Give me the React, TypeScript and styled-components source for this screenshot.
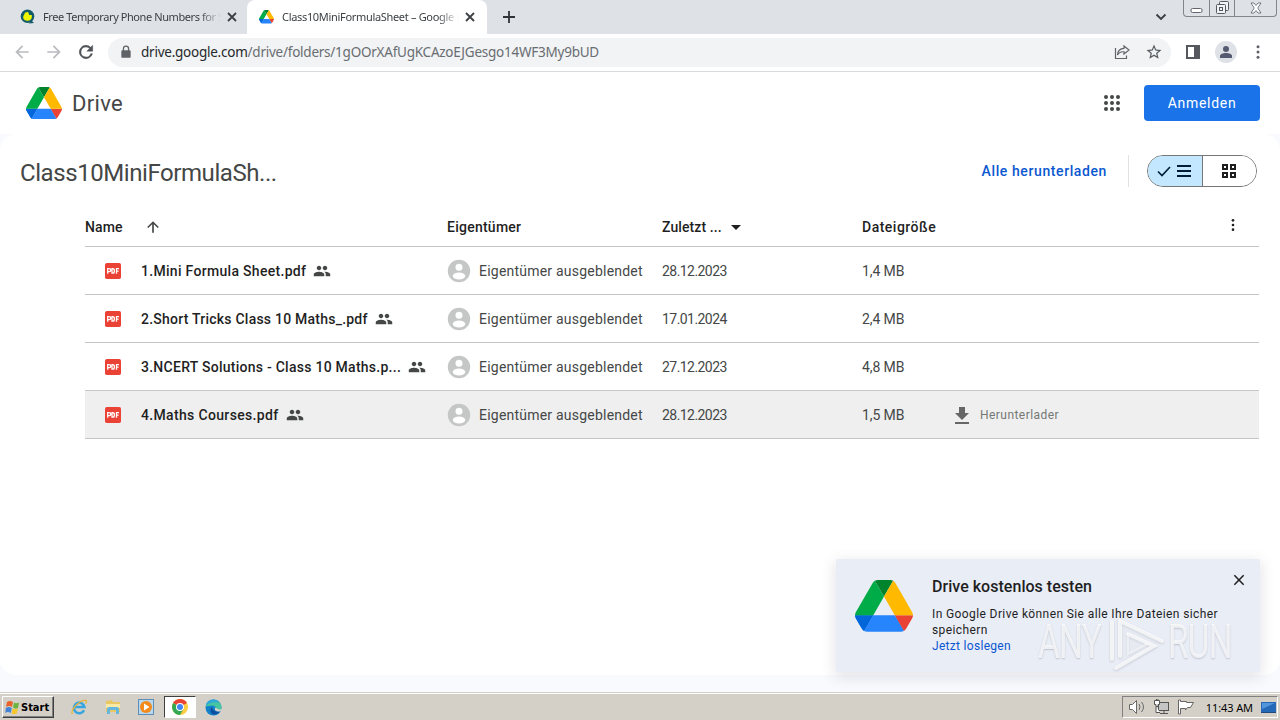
import type { ReactNode } from 'react'
import styled, { createGlobalStyle } from 'styled-components'

const GlobalStyle = createGlobalStyle`
  * {
    box-sizing: border-box;
  }

  body {
    margin: 0;
    overflow: hidden;
  }

  svg {
    display: block;
    flex: none;
  }
`

const uiFont = `'Noto Sans', 'Open Sans', sans-serif`
const pageFont = `Roboto, 'Liberation Sans', sans-serif`

const Screen = styled.div`
  position: relative;
  display: flex;
  flex-direction: column;
  width: 1280px;
  height: 720px;
  overflow: hidden;
  background: #fff;
  font-family: ${pageFont};
`

const Label = styled.span<{ $spacing?: number }>`
  white-space: pre;
  letter-spacing: ${(p) => p.$spacing ?? 0}px;
`

/* browser */

const TabStrip = styled.div`
  display: flex;
  height: 34px;
  background: #dee1e6;
  font-family: ${uiFont};
  font-size: 11px;
  color: #3c4043;
`

const Tab = styled.div<{ $active?: boolean }>`
  display: flex;
  align-items: center;
  width: ${(p) => (p.$active ? 240 : 247)}px;
  padding-left: ${(p) => (p.$active ? 12 : 20)}px;
  background: ${(p) => (p.$active ? '#fff' : 'transparent')};
  border-radius: 8px 8px 0 0;
`

const TabTitle = styled.div<{ $width: number; $spacing: number }>`
  width: ${(p) => p.$width}px;
  margin: 0 5px 0 8px;
  overflow: hidden;
  white-space: pre;
  letter-spacing: ${(p) => p.$spacing}px;
  mask-image: linear-gradient(to right, #000 88%, transparent);
`

const NewTab = styled.div`
  display: flex;
  flex: 1;
  align-items: center;
  padding-left: 15px;
`

const TabSearch = styled.div`
  display: flex;
  align-items: center;
  width: 28px;
`

const WindowButtons = styled.div`
  display: flex;
  width: 94px;
  height: 17px;
  margin-right: 3px;
  border: 1px solid #81868e;
  border-top: 0;
  border-radius: 0 0 4px 4px;
`

const WindowButton = styled.div<{ $width: number }>`
  display: flex;
  align-items: center;
  justify-content: center;
  width: ${(p) => p.$width}px;

  & + & {
    border-left: 1px solid #81868e;
  }
`

const Toolbar = styled.div`
  display: flex;
  align-items: center;
  height: 38px;
  padding: 0 13px 0 12px;
  border-bottom: 1px solid #d8dadd;
`

const NavIcons = styled.div`
  display: flex;
  gap: 12px;
  width: 96px;
`

const AddressBar = styled.div`
  display: flex;
  align-items: center;
  width: 1063px;
  height: 29px;
  padding: 0 8px 0 11px;
  border-radius: 15px;
  background: #f1f3f4;
  color: #696d72;
  font-family: ${uiFont};
  font-size: 13.5px;

  b {
    color: #25282b;
    font-weight: 400;
  }
`

const Url = styled.div`
  flex: 1;
  padding-left: 8px;
`

const AddressIcons = styled.div`
  display: flex;
  gap: 14px;
`

const ToolbarIcons = styled.div`
  display: flex;
  flex: 1;
  align-items: center;
  justify-content: flex-end;
  gap: 12px;
`

const ProfileBadge = styled.div`
  display: flex;
  align-items: center;
  justify-content: center;
  width: 22px;
  height: 22px;
  margin-left: 3px;
  border-radius: 50%;
  background: #dee1e6;
`

/* drive */

const Header = styled.header`
  display: flex;
  align-items: center;
  height: 63px;
  padding: 1px 20px 0 26px;
`

const Brand = styled.div`
  display: flex;
  flex: 1;
  align-items: center;
  gap: 10px;
  color: #444746;
  font-size: 22px;
`

const SignInButton = styled.button`
  width: 116px;
  height: 36px;
  margin-left: 20px;
  padding: 0;
  border: 0;
  border-radius: 4px;
  background: #1a73e8;
  color: #fff;
  font-family: ${pageFont};
  font-size: 14px;
`

const Page = styled.div`
  flex: 1;
  padding-bottom: 17px;
  background: #f8fafd;
`

const Panel = styled.main`
  height: 541px;
  padding-right: 20px;
  border-radius: 16px;
  background: #fff;
`

const TitleBar = styled.div`
  display: flex;
  align-items: center;
  height: 74px;
  padding: 0 3px 0 20px;
`

const FolderName = styled.h1`
  flex: 1;
  margin: 3px 0 0;
  color: #444746;
  font-size: 24px;
  font-weight: 400;
`

const DownloadAll = styled.a`
  color: #0b57d0;
  font-size: 14px;
  font-weight: 500;
`

const Divider = styled.div`
  width: 1px;
  height: 32px;
  margin: 0 18px 0 21px;
  background: #e0e2e5;
`

const ViewToggle = styled.div`
  display: flex;
  width: 110px;
  height: 32px;
  border: 1px solid #747775;
  border-radius: 16px;
  overflow: hidden;
`

const ToggleSide = styled.div<{ $on?: boolean }>`
  display: flex;
  flex: ${(p) => (p.$on ? '0 0 55px' : 1)};
  align-items: center;
  justify-content: center;
  gap: 6px;
  padding-right: 2px;
  border-right: ${(p) => (p.$on ? '1px solid #747775' : 0)};
  background: ${(p) => (p.$on ? '#c2e7ff' : '#fff')};
`

const Table = styled.div`
  margin-left: 85px;
  width: 1174px;
`

const Row = styled.div<{ $head?: boolean; $hover?: boolean }>`
  display: grid;
  grid-template-columns: 362px 215px 200px 92px 1fr;
  align-items: center;
  height: ${(p) => (p.$head ? 39 : 48)}px;
  border-bottom: 1px solid #c4c7c5;
  background: ${(p) => (p.$hover ? '#efefef' : 'transparent')};
  color: ${(p) => (p.$head ? '#1f1f1f' : '#444746')};
  font-size: 14px;
  font-weight: ${(p) => (p.$head ? 500 : 400)};
`

const Cell = styled.div<{ $gap?: number }>`
  display: flex;
  align-items: center;
  gap: ${(p) => p.$gap ?? 0}px;
`

const FileName = styled(Cell)`
  padding-left: 20px;
  color: #1f1f1f;
  font-weight: 500;

  svg:first-child {
    margin-right: 13px;
  }
`

const MenuCell = styled(Cell)`
  justify-content: flex-end;
  padding: 0 18px 5px 0;
`

const Download = styled(Cell)`
  color: #747775;
  font-size: 12px;
`

const Promo = styled.aside`
  position: absolute;
  left: 836px;
  top: 559px;
  display: flex;
  width: 424px;
  height: 113px;
  padding: 21px 14px 0 19px;
  background: #e9edf6;
  border-radius: 2px;
  box-shadow: 0 4px 14px 2px rgba(60, 64, 90, 0.13);
`

const PromoText = styled.div`
  flex: 1;
  padding-left: 19px;
  color: #1f1f1f;
  font-size: 12px;
  line-height: 16px;

  h2 {
    margin: -3px 0 9px;
    font-size: 16px;
    font-weight: 500;
    line-height: 20px;
  }

  a {
    display: block;
    color: #0b57d0;
  }
`

const PromoClose = styled.div`
  margin-top: -7px;
`

const Watermark = styled.div`
  position: absolute;
  left: 1038px;
  top: 612px;
  display: flex;
  align-items: center;
  width: 198px;
  height: 60px;
  color: rgba(255, 255, 255, 0.75);
  font-family: Roboto, sans-serif;
  font-size: 49px;
  line-height: 36px;
  text-shadow: 0 1px 2px rgba(90, 95, 110, 0.3);
`

const WatermarkWord = styled.span<{ $width: number }>`
  width: ${(p) => p.$width}px;
  letter-spacing: -1px;
  transform: scaleX(0.68);
  transform-origin: left;
`

const WatermarkPlay = styled.svg`
  filter: drop-shadow(0 1px 1px rgba(80, 85, 100, 0.3));
`

/* taskbar */

const Taskbar = styled.footer`
  display: flex;
  align-items: center;
  height: 28px;
  padding: 1px 2px 0;
  border-top: 1px solid #d4d0c8;
  background: #d4d0c8;
  box-shadow: inset 0 1px #fff;
`

const StartButton = styled.div`
  display: flex;
  align-items: center;
  gap: 1px;
  width: 52px;
  height: 22px;
  padding-left: 2px;
  border: 1px solid;
  border-color: #fff #404040 #404040 #fff;
  box-shadow: inset -1px -1px #808080;
  color: #000;
  font-family: 'DejaVu Sans Condensed', 'DejaVu Sans', sans-serif;
  font-size: 11px;
  font-weight: 700;
`

const TaskIcon = styled.div<{ $active?: boolean }>`
  display: flex;
  align-items: center;
  justify-content: center;
  width: 32px;
  height: 22px;
  margin-left: 1.7px;
  border: 1px solid;
  border-color: ${(p) => (p.$active ? '#404040 #fff #fff #404040' : 'transparent')};
  background: ${(p) => (p.$active ? '#fff' : 'transparent')};
`

const TaskIcons = styled.div`
  display: flex;
  flex: 1;
  padding-left: 7.5px;
`

const Tray = styled.div`
  display: flex;
  align-items: center;
  width: 156px;
  height: 22px;
  padding-left: 5px;
  border: 1px solid;
  border-color: #808080 #fff #fff #808080;
  color: #000;
  font-family: ${uiFont};
  font-size: 11px;
`

const TrayIcons = styled.div`
  display: flex;
  gap: 7px;
  width: 79px;
`

type IconProps = { size?: number; color?: string; children: ReactNode }

const Icon = ({ size = 20, color = '#5f6368', children }: IconProps) => (
  <svg width={size} height={size} viewBox="0 0 24 24" fill={color}>
    {children}
  </svg>
)

const DriveLogo = ({ width }: { width: number }) => (
  <svg width={width} height={(width * 78) / 87.3} viewBox="0 0 87.3 78">
    <path fill="#2684fc" d="m6.6 66.85 3.85 6.65c.8 1.4 1.95 2.5 3.3 3.3l13.75-23.8h-27.5c0 1.55.4 3.1 1.2 4.5z" />
    <path fill="#0066da" d="m1.2 57.5 5.4 9.35 3.85 6.65c.8 1.4 1.95 2.5 3.3 3.3l13.75-23.8h-27.5c0 1.55.4 3.1 1.2 4.5z" />
    <path fill="#00ac47" d="m43.65 25-13.75-23.8c-1.35.8-2.5 1.9-3.3 3.3l-25.4 44a9.06 9.06 0 0 0-1.2 4.5h27.5z" />
    <path fill="#ea4335" d="m73.55 76.8c1.35-.8 2.5-1.9 3.3-3.3l1.6-2.75 7.65-13.25c.8-1.4 1.2-2.95 1.2-4.5h-27.5l5.85 11.5z" />
    <path fill="#00832d" d="m43.65 25 13.75-23.8c-1.35-.8-2.9-1.2-4.5-1.2h-18.5c-1.6 0-3.15.45-4.5 1.2z" />
    <path fill="#2684fc" d="m59.8 53h-32.3l-13.75 23.8c1.35.8 2.9 1.2 4.5 1.2h50.8c1.6 0 3.15-.45 4.5-1.2z" />
    <path fill="#ffba00" d="m73.4 26.5-12.7-22c-.8-1.4-1.95-2.5-3.3-3.3l-13.75 23.8 16.15 28h27.45c0-1.55-.4-3.1-1.2-4.5z" />
  </svg>
)

const CloseIcon = ({ size = 12, color = '#3c4043', stroke = 1.8 }) => (
  <svg width={size} height={size} viewBox="0 0 12 12" fill="none" stroke={color} strokeWidth={stroke}>
    <path d="M2 2l8 8M10 2l-8 8" />
  </svg>
)

const PdfIcon = () => (
  <svg width="16" height="16" viewBox="0 0 16 16">
    <rect width="16" height="16" rx="1.8" fill="#ea4335" />
    <path
      d="M2.7 10.8V5.7h1.6a1.4 1.4 0 0 1 0 2.9H2.7M7 5.7v4.4h.8c1 0 1.6-.7 1.6-2.2S8.800 5.700 7.800 5.700zM11.500 10.800V5.700h2.500M11.500 8.200h2.100"
      fill="none"
      stroke="#fff"
      strokeWidth="1.3"
    />
  </svg>
)

const PeopleIcon = () => (
  <Icon size={18} color="#444746">
    <path d="M16 11c1.660 0 2.990-1.340 2.990-3S17.660 5 16 5s-3 1.340-3 3 1.340 3 3 3zm-8 0c1.660 0 2.990-1.340 2.990-3S9.660 5 8 5 5 6.340 5 8s1.340 3 3 3zm0 2c-2.330 0-7 1.170-7 3.500V19h14v-2.500c0-2.330-4.670-3.500-7-3.500zm8 0c-.29 0-.62.020-.97.050 1.160.84 1.970 1.970 1.970 3.450V19h6v-2.500c0-2.330-4.670-3.500-7-3.500z" />
  </Icon>
)

const OwnerIcon = () => (
  <svg width="24" height="24" viewBox="0 0 24 24">
    <circle cx="12" cy="12" r="11.200" fill="#c4c7c5" />
    <circle cx="12" cy="8.300" r="3.500" fill="#fff" />
    <ellipse cx="12" cy="17" rx="6.300" ry="3.500" fill="#fff" />
  </svg>
)

const MoreIcon = ({ size = 18, color = '#5f6368' }) => (
  <Icon size={size} color={color}>
    <circle cx="12" cy="5" r="2" />
    <circle cx="12" cy="12" r="2" />
    <circle cx="12" cy="19" r="2" />
  </Icon>
)

const files = [
  { name: '1.Mini Formula Sheet.pdf', spacing: 0.3, date: '28.12.2023', size: '1,4 MB' },
  { name: '2.Short Tricks Class 10 Maths_.pdf', spacing: 0.23, date: '17.01.2024', size: '2,4 MB' },
  { name: '3.NCERT Solutions - Class 10 Maths.p...', spacing: 0.26, date: '27.12.2023', size: '4,8 MB' },
  { name: '4.Maths Courses.pdf', spacing: 0.34, date: '28.12.2023', size: '1,5 MB', hover: true },
]

const BrowserChrome = () => (
  <>
    <TabStrip>
      <Tab>
        <svg width="15" height="15" viewBox="0 0 15 15">
          <circle cx="7.500" cy="7.300" r="6.800" fill="#145b6c" />
          <path d="M11 11l3 3-5 .5z" fill="#145b6c" />
          <path d="M3.200 7.500l2-4 3-.5 1 3h2.600v2.600a4.400 3.700 0 0 1-8.600.4z" fill="#eef600" />
        </svg>
        <TabTitle $width={178} $spacing={-0.42}>Free Temporary Phone Numbers for S</TabTitle>
        <CloseIcon />
      </Tab>
      <Tab $active>
        <DriveLogo width={15} />
        <TabTitle $width={177} $spacing={-0.32}>Class10MiniFormulaSheet – Google D</TabTitle>
        <CloseIcon />
      </Tab>
      <NewTab>
        <svg width="14" height="14" viewBox="0 0 14 14" stroke="#303338" strokeWidth="1.800">
          <path d="M7 1v12M1 7h12" />
        </svg>
      </NewTab>
      <TabSearch>
        <svg width="12" height="12" viewBox="0 0 12 12" fill="none" stroke="#3c4043" strokeWidth="1.900">
          <path d="M1.500 3.500L6 8l4.500-4.500" />
        </svg>
      </TabSearch>
      <WindowButtons>
        <WindowButton $width={25}>
          <svg width="13" height="14" viewBox="0 0 13 14" fill="#fff" stroke="#62676e">
            <rect x="1" y="7.500" width="11" height="4" rx="1.500" />
          </svg>
        </WindowButton>
        <WindowButton $width={25}>
          <svg width="14" height="14" viewBox="0 0 14 14" fill="#f2f3f5" stroke="#555a62">
            <rect x="4.500" y=".5" width="9" height="9" rx="1" />
            <rect x="1.500" y="3.500" width="9" height="9" rx="1" />
            <rect x="4.500" y="6.500" width="3" height="3" />
          </svg>
        </WindowButton>
        <WindowButton $width={42}>
          <svg width="12" height="12" viewBox="0 0 12 12" fill="#fff" stroke="#6b7077" strokeWidth=".9">
            <path d="M1 1h3l2 2.500L8 1h3L7.800 6l3.200 5H8L6 8.500 4 11H1l3.200-5z" />
          </svg>
        </WindowButton>
      </WindowButtons>
    </TabStrip>
    <Toolbar>
      <NavIcons>
        <Icon color="#b9bbbe">
          <path d="M20 11H7.800l5.600-5.600L12 4l-8 8 8 8 1.400-1.400L7.800 13H20z" />
        </Icon>
        <Icon color="#b9bbbe">
          <path d="M4 13h12.200l-5.600 5.600L12 20l8-8-8-8-1.400 1.400 5.600 5.600H4z" />
        </Icon>
        <Icon color="#4e5257">
          <path d="M17.650 6.350A8 8 0 1 0 19.730 14h-2.080A6 6 0 1 1 12 6c1.660 0 3.140.690 4.220 1.780L13 11h7V4z" stroke="#4e5257" strokeWidth=".6" />
        </Icon>
      </NavIcons>
      <AddressBar>
        <Icon size={14}>
          <path d="M19 9h-1.500V6.500a5.500 5.500 0 0 0-11 0V9H5a2 2 0 0 0-1 1.700V20a2 2 0 0 0 2 2h12a2 2 0 0 0 2-2v-9.300A2 2 0 0 0 19 9zM15.300 9H8.700V6.500a3.300 3.300 0 0 1 6.600 0z" />
        </Icon>
        <Url>
          <Label $spacing={-0.24}>
            <b>drive.google.com</b>/drive/folders/1gOOrXAfUgKCAzoEJGesgo14WF3My9bUD
          </Label>
        </Url>
        <AddressIcons>
          <svg width="18" height="18" viewBox="0 0 18 18" fill="none" stroke="#5f6368" strokeWidth="1.200">
            <path d="M2.500 5v10.500h11v-3M11 3l5 4-5 4V8.800C7.500 8.500 5.500 10 4.500 12c.2-4 2.500-6.500 6.500-6.700z" />
          </svg>
          <Icon size={18} color="#555a5f">
            <path d="M22 9.240l-7.190-.62L12 2 9.190 8.630 2 9.240l5.460 4.730L5.820 21 12 17.270 18.180 21l-1.630-7.030zM12 15.400l-3.760 2.270 1-4.280-3.320-2.880 4.380-.38L12 6.100l1.710 4.040 4.380.38-3.320 2.880 1 4.280z" />
          </Icon>
        </AddressIcons>
      </AddressBar>
      <ToolbarIcons>
        <svg width="14" height="14" viewBox="0 0 14 14">
          <path d="M0 0h14v14H0zM2 2v10h6V2z" fill="#55595e" fillRule="evenodd" />
        </svg>
        <ProfileBadge>
          <svg width="14" height="14" viewBox="0 0 14 14" fill="#545b70">
            <circle cx="7" cy="4" r="3" />
            <path d="M1 13v-2c0-2 3-3 6-3s6 1 6 3v2z" />
          </svg>
        </ProfileBadge>
        <MoreIcon />
      </ToolbarIcons>
    </Toolbar>
  </>
)

const FileTable = () => (
  <Table>
    <Row $head>
      <Cell $gap={20}>
        <Label $spacing={0.15}>Name</Label>
        <Icon size={20} color="#444746">
          <path d="M5 12l1.300 1.300L11 8.600V19h2V8.600l4.700 4.700L19 12l-7-7z" />
        </Icon>
      </Cell>
      <Cell>
        <Label $spacing={0.25}>Eigentümer</Label>
      </Cell>
      <Cell $gap={9}>
        <Label $spacing={0.1}>Zuletzt ...</Label>
        <svg width="10" height="5" viewBox="0 0 10 5" fill="#1f1f1f">
          <path d="M0 0h10L5 5z" />
        </svg>
      </Cell>
      <Cell>
        <Label $spacing={0.5}>Dateigröße</Label>
      </Cell>
      <MenuCell>
        <MoreIcon size={16} color="#1f1f1f" />
      </MenuCell>
    </Row>
    {files.map((file) => (
      <Row key={file.name} $hover={file.hover}>
        <FileName $gap={7}>
          <PdfIcon />
          <Label $spacing={file.spacing}>{file.name}</Label>
          <PeopleIcon />
        </FileName>
        <Cell $gap={8}>
          <OwnerIcon />
          <Label $spacing={0.22}>Eigentümer ausgeblendet</Label>
        </Cell>
        <Label $spacing={-0.55}>{file.date}</Label>
        <Label $spacing={-0.1}>{file.size}</Label>
        {file.hover && (
          <Download $gap={10}>
            <svg width="16" height="18" viewBox="0 0 16 18" fill="#666">
              <path d="M5 1h6v6h4l-7 7-7-7h4zM1 16h14v2H1z" />
            </svg>
            <Label $spacing={0.45}>Herunterlader</Label>
          </Download>
        )}
      </Row>
    ))}
  </Table>
)

const WindowsTaskbar = () => (
  <Taskbar>
    <StartButton>
      <svg width="15" height="15" viewBox="0 0 15 15">
        <path d="M2 2q3-2 6 0L7 7Q4 5 1 7z" fill="#e8632b" />
        <path d="M9 2.500q2 1.500 5 0L13 8q-3 1.500-5-.5z" fill="#6db33f" />
        <path d="M.800 8q3-2 6 0l-1 5q-3-2-5.500 0z" fill="#4384d6" />
        <path d="M7.600 8.500q2.400 1.500 5.200 0l-1 5q-3 1.500-5.200 0z" fill="#f6c62e" />
      </svg>
      Start
    </StartButton>
    <TaskIcons>
      <TaskIcon>
        <svg width="18" height="18" viewBox="0 0 18 18" fill="none">
          <path d="M14 12.200a5.300 5.300 0 1 1 .4-3.200H5" stroke="#38a5df" strokeWidth="2.600" />
          <path d="M2.500 16C-1 13 10.500 1 16 2.500c1.200.5.500 2-.5 3" stroke="#e7b53b" strokeWidth="1.300" />
        </svg>
      </TaskIcon>
      <TaskIcon>
        <svg width="18" height="18" viewBox="0 0 18 18">
          <path d="M2 3l6-1 1 2h7v10H2z" fill="#e9c763" />
          <path d="M2 6h14v4H2z" fill="#f9e9a5" />
          <path d="M3 16v-5q0-2 2-2h8q2 0 2 2v5h-3v-4H6v4z" fill="#66b7dd" />
        </svg>
      </TaskIcon>
      <TaskIcon>
        <svg width="17" height="17" viewBox="0 0 17 17">
          <rect x=".5" y=".5" width="15" height="15" fill="#b9d7ed" stroke="#5b8fb9" />
          <circle cx="8" cy="8" r="6" fill="#f28a1c" />
          <path d="M6 4.500v7L11.500 8z" fill="#fff" />
        </svg>
      </TaskIcon>
      <TaskIcon $active>
        <svg width="16" height="16" viewBox="0 0 16 16">
          <circle cx="8" cy="8" r="8" fill="#ffcd41" />
          <path d="M8 8L1.100 4A8 8 0 0 1 14.900 4z" fill="#ea4335" />
          <path d="M8 8L1.100 4A8 8 0 0 0 8 16l3.500-6z" fill="#34a853" />
          <circle cx="8" cy="8" r="4" fill="#fff" />
          <circle cx="8" cy="8" r="3" fill="#4285f4" />
        </svg>
      </TaskIcon>
      <TaskIcon>
        <svg width="17" height="17" viewBox="0 0 17 17">
          <circle cx="8.500" cy="8.500" r="8" fill="#1480c9" />
          <path d="M.7 7A8 8 0 0 1 16.500 8.500c0 3-3 4-6 3 1.500-2 0-5-3.500-5C4 6.500 1.500 8 .7 7z" fill="#45c6a0" />
          <path d="M.7 7A8 8 0 0 1 8 .5c3 0 5 1 6.500 3C11 3 4 3 .7 7z" fill="#2fa9d8" />
          <path d="M7 8c0 3 4 5.500 8 4.300-1 2-4 3.600-6.500 3.200C5 14.500 4.500 10 7 8z" fill="#0c4f9f" />
          <path d="M10.500 11.500c-1-.8-.2-1.500-.6-3 2 .5 4.600 3 6.800 1.500l-1 2.300c-2 .6-4 .2-5.200-.8z" fill="#d4d0c8" />
        </svg>
      </TaskIcon>
    </TaskIcons>
    <Tray>
      <TrayIcons>
        <svg width="18" height="16" viewBox="0 0 18 16" fill="#fff" stroke="#686868">
          <path d="M1.500 5.500h3l4-4v13l-4-4h-3z" />
          <path d="M11 5q2 3 0 6M13.500 3q4 5 0 10" fill="none" />
        </svg>
        <svg width="17" height="16" viewBox="0 0 17 16" fill="#fff" stroke="#555">
          <rect x="5.500" y="3.500" width="10" height="8" fill="#c5c5c5" />
          <path d="M1.500 1.500h5v4h-1.500v2h-2v-2h-1.500zM3 7.500v6h4M7 14.500h8M11 12v2M3.500 0v2M5 0v2" />
        </svg>
        <svg width="18" height="16" viewBox="0 0 18 16" fill="#fff" stroke="#666">
          <path d="M1.500 1v14h2V9.500h5V11l2-2.500h3l3-5h-7v-1h-6V1z" />
        </svg>
      </TrayIcons>
      <Label $spacing={-0.1}>11:43 AM</Label>
      <svg width="24" height="16" viewBox="0 0 24 16">
        <rect x="8" y="3" width="15" height="10" fill="#2468b8" />
        <path d="M9 4h13l-13 6z" fill="#5295db" />
        <path d="M8 13.500h15" stroke="#234a7d" />
      </svg>
    </Tray>
  </Taskbar>
)

const App = () => {
  return (
    <Screen>
      <GlobalStyle />
      <BrowserChrome />
      <Header>
        <Brand>
          <DriveLogo width={36} />
          <Label $spacing={0.3}>Drive</Label>
        </Brand>
        <Icon size={24} color="#444746">
          {[6, 12, 18].map((y) => [6, 12, 18].map((x) => <circle key={`${x}-${y}`} cx={x} cy={y} r="2" />))}
        </Icon>
        <SignInButton>
          <Label $spacing={0.7}>Anmelden</Label>
        </SignInButton>
      </Header>
      <Page>
        <Panel>
          <TitleBar>
            <FolderName>
              <Label $spacing={-0.43}>Class10MiniFormulaSh...</Label>
            </FolderName>
            <DownloadAll>
              <Label $spacing={0.6}>Alle herunterladen</Label>
            </DownloadAll>
            <Divider />
            <ViewToggle>
              <ToggleSide $on>
                <svg width="14" height="12" viewBox="0 0 14 12" fill="none" stroke="#001d35" strokeWidth="1.600">
                  <path d="M1 6.500l4 4L13 2" />
                </svg>
                <svg width="14" height="12" viewBox="0 0 14 12" stroke="#001d35" strokeWidth="2">
                  <path d="M0 1h14M0 6h14M0 11h14" />
                </svg>
              </ToggleSide>
              <ToggleSide>
                <svg width="14" height="14" viewBox="0 0 14 14" fill="none" stroke="#1f1f1f" strokeWidth="2">
                  <path d="M1 1h4v4H1zM9 1h4v4H9zM1 9h4v4H1zM9 9h4v4H9z" />
                </svg>
              </ToggleSide>
            </ViewToggle>
          </TitleBar>
          <FileTable />
        </Panel>
      </Page>
      <WindowsTaskbar />
      <Promo>
        <DriveLogo width={58} />
        <PromoText>
          <h2>
            <Label $spacing={0.03}>Drive kostenlos testen</Label>
          </h2>
          <Label $spacing={0.39}>{'In Google Drive können Sie alle Ihre Dateien sicher\nspeichern'}</Label>
          <a>
            <Label $spacing={0.3}>Jetzt loslegen</Label>
          </a>
        </PromoText>
        <PromoClose>
          <CloseIcon size={14} color="#1f1f1f" stroke={1.3} />
        </PromoClose>
      </Promo>
      <Watermark>
        <WatermarkWord $width={70}>ANY</WatermarkWord>
        <WatermarkPlay width="60" height="60" viewBox="0 0 60 60" fill="none" stroke="#fff" strokeOpacity=".75" strokeWidth="4" strokeLinecap="round">
          <path d="M13 11v38l37-20z" fill="#fff" fillOpacity=".15" stroke="none" />
          <path d="M4 10v37M12 44V9l42 20M20 22l26 12L8 56" />
          <path d="M20 24v18l19-10" strokeWidth="2" strokeOpacity=".5" />
        </WatermarkPlay>
        <WatermarkWord $width={66}>RUN</WatermarkWord>
      </Watermark>
    </Screen>
  )
}

export default App
